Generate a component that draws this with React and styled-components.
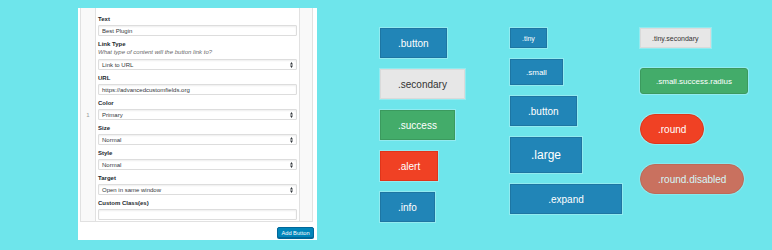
import React from "react";
import styled, { createGlobalStyle, css } from "styled-components";

const GlobalStyle = createGlobalStyle`
  body {
    margin: 0;
    background: #6ee5eb;
    font-family: "Liberation Sans", Arial, sans-serif;
  }
`;

const Page = styled.div`
  display: flex;
  align-items: flex-start;
  width: 772px;
  height: 250px;
  padding: 8px 0 0 78px;
  box-sizing: border-box;
  overflow: hidden;
`;

const Panel = styled.div`
  display: flex;
  flex-direction: column;
  width: 239px;
  height: 232px;
  padding: 0 4px 0 2px;
  box-sizing: border-box;
  background: #fff;
`;

const Table = styled.div`
  display: flex;
  height: 214px;
  border: 1px solid #e1e1e1;
  border-top: none;
  box-sizing: border-box;
`;

const RowNum = styled.div`
  display: flex;
  align-items: center;
  justify-content: center;
  width: 14px;
  background: #f9f9f9;
  border-right: 1px solid #e1e1e1;
  font-size: 6px;
  color: #999;
`;

const Fields = styled.div`
  flex: 1;
  padding: 7px 2px 0;
`;

const Side = styled.div`
  width: 12px;
  background: #f9f9f9;
  border-left: 1px solid #e1e1e1;
`;

const Field = styled.div`
  margin-bottom: 4px;
`;

const Label = styled.div`
  font-size: 6px;
  font-weight: bold;
  line-height: 8px;
  color: #23282d;
`;

const Desc = styled.div`
  font-size: 6px;
  font-style: italic;
  line-height: 9px;
  color: #666;
`;

const Box = styled.div`
  display: flex;
  align-items: center;
  justify-content: space-between;
  height: 11px;
  margin-top: 2px;
  padding: 0 3px;
  box-sizing: border-box;
  border: 1px solid #ddd;
  border-radius: 1px;
  box-shadow: inset 0 1px 2px rgba(0, 0, 0, 0.07);
  font-size: 6px;
  color: #32373c;
`;

const Footer = styled.div`
  display: flex;
  justify-content: flex-end;
  margin: 5px -1px 0 0;
`;

const AddButton = styled.div`
  display: flex;
  align-items: center;
  justify-content: center;
  width: 37px;
  height: 11px;
  background: #0085ba;
  border: 1px solid #006799;
  border-radius: 2px;
  box-shadow: 0 1px 0 #006799;
  box-sizing: border-box;
  font-size: 5.7px;
  color: #fff;
`;

const Demo = styled.div`
  display: grid;
  grid-template-columns: 130px 130px 132px;
  margin: 20px 0 0 63px;
`;

const Column = styled.div`
  display: flex;
  flex-direction: column;
  align-items: flex-start;
  gap: ${(p) => p.$gap}px;
`;

const sizes = {
  tiny: css`
    height: 20px;
    padding: 0 11px;
    font-size: 7px;
  `,
  small: css`
    height: 26px;
    padding: 0 15px;
    font-size: 8px;
  `,
  medium: css`
    height: 30px;
    padding: 0 17px;
    font-size: 10px;
  `,
  large: css`
    height: 36px;
    padding: 0 20px;
    font-size: 12px;
  `,
};

const colors = {
  primary: { bg: "#2185b7", border: "#1d76a3", text: "#fff" },
  secondary: { bg: "#e7e7e7", border: "#dadada", text: "#333" },
  success: { bg: "#43ac6a", border: "#3b9a5e", text: "#fff" },
  alert: { bg: "#f04124", border: "#e0351a", text: "#fff" },
};

const Btn = styled.div`
  display: flex;
  align-items: center;
  justify-content: center;
  box-sizing: border-box;
  white-space: nowrap;
  ${(p) => sizes[p.$size || "medium"]}
  width: ${(p) => (p.$width ? `${p.$width}px` : "auto")};
  background: ${(p) => colors[p.$variant || "primary"].bg};
  color: ${(p) => colors[p.$variant || "primary"].text};
  border: 1px solid ${(p) => colors[p.$variant || "primary"].border};
  box-shadow: 0 0 0 1px rgba(255, 255, 255, 0.25);
  border-radius: ${(p) => (p.$round ? "1000px" : p.$radius ? "3px" : "0")};
  opacity: ${(p) => (p.$disabled ? 0.7 : 1)};
`;

function Arrows() {
  return (
    <svg width="3" height="6" viewBox="0 0 3 6">
      <path d="M1.5 0 L3 2.4 L0 2.4 Z M1.5 6 L3 3.6 L0 3.6 Z" fill="#32373c" />
    </svg>
  );
}

const fields = [
  { label: "Text", value: "Best Plugin" },
  {
    label: "Link Type",
    desc: "What type of content will the button link to?",
    value: "Link to URL",
    select: true,
  },
  { label: "URL", value: "https://advancedcustomfields.org" },
  { label: "Color", value: "Primary", select: true },
  { label: "Size", value: "Normal", select: true },
  { label: "Style", value: "Normal", select: true },
  { label: "Target", value: "Open in same window", select: true },
  { label: "Custom Class(es)", value: "" },
];

export default function App() {
  return (
    <>
      <GlobalStyle />
      <Page>
        <Panel>
          <Table>
            <RowNum>1</RowNum>
            <Fields>
              {fields.map((f) => (
                <Field key={f.label}>
                  <Label>{f.label}</Label>
                  {f.desc && <Desc>{f.desc}</Desc>}
                  <Box>
                    <span>{f.value}</span>
                    {f.select && <Arrows />}
                  </Box>
                </Field>
              ))}
            </Fields>
            <Side />
          </Table>
          <Footer>
            <AddButton>Add Button</AddButton>
          </Footer>
        </Panel>
        <Demo>
          <Column $gap={11}>
            <Btn>.button</Btn>
            <Btn $variant="secondary">.secondary</Btn>
            <Btn $variant="success">.success</Btn>
            <Btn $variant="alert">.alert</Btn>
            <Btn>.info</Btn>
          </Column>
          <Column $gap={11}>
            <Btn $size="tiny">.tiny</Btn>
            <Btn $size="small">.small</Btn>
            <Btn>.button</Btn>
            <Btn $size="large">.large</Btn>
            <Btn $width={112}>.expand</Btn>
          </Column>
          <Column $gap={20}>
            <Btn $size="tiny" $variant="secondary">
              .tiny.secondary
            </Btn>
            <Btn $size="small" $variant="success" $radius>
              .small.success.radius
            </Btn>
            <Btn $variant="alert" $round>
              .round
            </Btn>
            <Btn $variant="alert" $round $disabled>
              .round.disabled
            </Btn>
          </Column>
        </Demo>
      </Page>
    </>
  );
}
